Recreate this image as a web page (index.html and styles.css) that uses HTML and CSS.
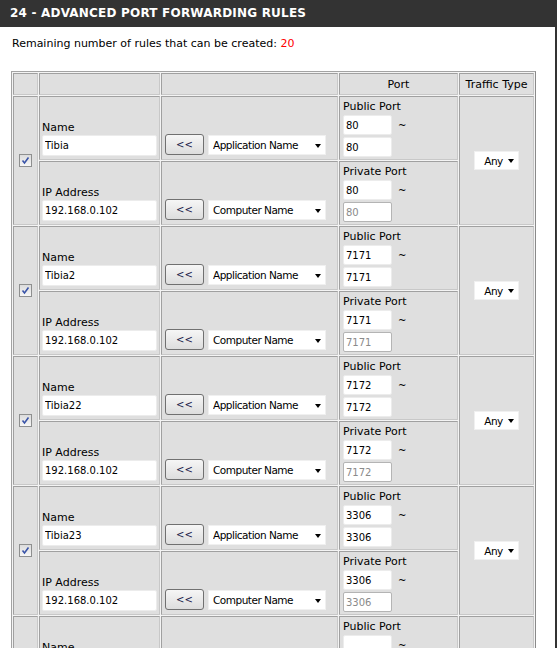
FILE: index.html
```html
<!DOCTYPE html>
<html>
<head>
<meta charset="utf-8">
<title>Advanced Port Forwarding Rules</title>
<link rel="stylesheet" href="styles.css">
</head>
<body>
<div class="page">
  <div class="title">24 - ADVANCED PORT FORWARDING RULES</div>
  <div class="content">
    <p class="remaining">Remaining number of rules that can be created: <span class="count">20</span></p>
    <table class="rules">
      <colgroup><col class="c1"><col class="c2"><col class="c3"><col class="c4"><col class="c5"></colgroup>
      <tr class="head"><td></td><td></td><td></td><td>Port</td><td>Traffic Type</td></tr>

      <tr class="sub">
        <td rowspan="2" class="chk"><span class="checkbox"><svg viewBox="0 0 11 11" width="11" height="11"><path d="M2.5 5.5 L4.5 8 L8.5 2.5" fill="none" stroke="#3a54a8" stroke-width="1.6"/></svg></span></td>
        <td class="field"><div class="lbl">Name</div><input class="text" value="Tibia"></td>
        <td class="pick"><button class="btn">&lt;&lt;</button><span class="sel wide"><span class="seltext">Application Name</span><span class="arrow"></span></span></td>
        <td class="port"><div class="lbl">Public Port</div><div class="prow"><input class="pin" value="80"><span class="tilde">~</span></div><input class="pin" value="80"></td>
        <td rowspan="2" class="traffic"><span class="sel any"><span class="seltext">Any</span><span class="arrow"></span></span></td>
      </tr>
      <tr class="sub">
        <td class="field"><div class="lbl">IP Address</div><input class="text" value="192.168.0.102"></td>
        <td class="pick"><button class="btn">&lt;&lt;</button><span class="sel wide"><span class="seltext">Computer Name</span><span class="arrow"></span></span></td>
        <td class="port"><div class="lbl">Private Port</div><div class="prow"><input class="pin" value="80"><span class="tilde">~</span></div><input class="pin dis" value="80" disabled></td>
      </tr>

      <tr class="sub">
        <td rowspan="2" class="chk"><span class="checkbox"><svg viewBox="0 0 11 11" width="11" height="11"><path d="M2.5 5.5 L4.5 8 L8.5 2.5" fill="none" stroke="#3a54a8" stroke-width="1.6"/></svg></span></td>
        <td class="field"><div class="lbl">Name</div><input class="text" value="Tibia2"></td>
        <td class="pick"><button class="btn">&lt;&lt;</button><span class="sel wide"><span class="seltext">Application Name</span><span class="arrow"></span></span></td>
        <td class="port"><div class="lbl">Public Port</div><div class="prow"><input class="pin" value="7171"><span class="tilde">~</span></div><input class="pin" value="7171"></td>
        <td rowspan="2" class="traffic"><span class="sel any"><span class="seltext">Any</span><span class="arrow"></span></span></td>
      </tr>
      <tr class="sub">
        <td class="field"><div class="lbl">IP Address</div><input class="text" value="192.168.0.102"></td>
        <td class="pick"><button class="btn">&lt;&lt;</button><span class="sel wide"><span class="seltext">Computer Name</span><span class="arrow"></span></span></td>
        <td class="port"><div class="lbl">Private Port</div><div class="prow"><input class="pin" value="7171"><span class="tilde">~</span></div><input class="pin dis" value="7171" disabled></td>
      </tr>

      <tr class="sub">
        <td rowspan="2" class="chk"><span class="checkbox"><svg viewBox="0 0 11 11" width="11" height="11"><path d="M2.5 5.5 L4.5 8 L8.5 2.5" fill="none" stroke="#3a54a8" stroke-width="1.6"/></svg></span></td>
        <td class="field"><div class="lbl">Name</div><input class="text" value="Tibia22"></td>
        <td class="pick"><button class="btn">&lt;&lt;</button><span class="sel wide"><span class="seltext">Application Name</span><span class="arrow"></span></span></td>
        <td class="port"><div class="lbl">Public Port</div><div class="prow"><input class="pin" value="7172"><span class="tilde">~</span></div><input class="pin" value="7172"></td>
        <td rowspan="2" class="traffic"><span class="sel any"><span class="seltext">Any</span><span class="arrow"></span></span></td>
      </tr>
      <tr class="sub">
        <td class="field"><div class="lbl">IP Address</div><input class="text" value="192.168.0.102"></td>
        <td class="pick"><button class="btn">&lt;&lt;</button><span class="sel wide"><span class="seltext">Computer Name</span><span class="arrow"></span></span></td>
        <td class="port"><div class="lbl">Private Port</div><div class="prow"><input class="pin" value="7172"><span class="tilde">~</span></div><input class="pin dis" value="7172" disabled></td>
      </tr>

      <tr class="sub">
        <td rowspan="2" class="chk"><span class="checkbox"><svg viewBox="0 0 11 11" width="11" height="11"><path d="M2.5 5.5 L4.5 8 L8.5 2.5" fill="none" stroke="#3a54a8" stroke-width="1.6"/></svg></span></td>
        <td class="field"><div class="lbl">Name</div><input class="text" value="Tibia23"></td>
        <td class="pick"><button class="btn">&lt;&lt;</button><span class="sel wide"><span class="seltext">Application Name</span><span class="arrow"></span></span></td>
        <td class="port"><div class="lbl">Public Port</div><div class="prow"><input class="pin" value="3306"><span class="tilde">~</span></div><input class="pin" value="3306"></td>
        <td rowspan="2" class="traffic"><span class="sel any"><span class="seltext">Any</span><span class="arrow"></span></span></td>
      </tr>
      <tr class="sub">
        <td class="field"><div class="lbl">IP Address</div><input class="text" value="192.168.0.102"></td>
        <td class="pick"><button class="btn">&lt;&lt;</button><span class="sel wide"><span class="seltext">Computer Name</span><span class="arrow"></span></span></td>
        <td class="port"><div class="lbl">Private Port</div><div class="prow"><input class="pin" value="3306"><span class="tilde">~</span></div><input class="pin dis" value="3306" disabled></td>
      </tr>

      <tr class="sub">
        <td rowspan="2" class="chk"><span class="checkbox empty"></span></td>
        <td class="field"><div class="lbl">Name</div><input class="text" value=""></td>
        <td class="pick"><button class="btn">&lt;&lt;</button><span class="sel wide"><span class="seltext">Application Name</span><span class="arrow"></span></span></td>
        <td class="port"><div class="lbl">Public Port</div><div class="prow"><input class="pin" value=""><span class="tilde">~</span></div><input class="pin" value=""></td>
        <td rowspan="2" class="traffic"><span class="sel any"><span class="seltext">Any</span><span class="arrow"></span></span></td>
      </tr>
      <tr class="sub">
        <td class="field"><div class="lbl">IP Address</div><input class="text" value=""></td>
        <td class="pick"><button class="btn">&lt;&lt;</button><span class="sel wide"><span class="seltext">Computer Name</span><span class="arrow"></span></span></td>
        <td class="port"><div class="lbl">Private Port</div><div class="prow"><input class="pin" value=""><span class="tilde">~</span></div><input class="pin dis" value="" disabled></td>
      </tr>
    </table>
  </div>
</div>
</body>
</html>
```

FILE: styles.css
```css
html, body {
  margin: 0;
  padding: 0;
  background: #fff;
}

body {
  font-family: "DejaVu Sans", Verdana, sans-serif;
  font-size: 11px;
  color: #000;
}

.page {
  width: 555px;
  border-right: 2px solid #333;
  min-height: 700px;
}

.title {
  height: 27px;
  margin-right: -2px;
  background: #333;
  color: #fff;
  font-weight: bold;
  font-size: 12px;
  letter-spacing: 0.2px;
  line-height: 27px;
  padding-left: 10px;
}

.content {
  padding-left: 11px;
}

.remaining {
  margin: 0;
  padding: 10px 0 0 1px;
  line-height: 14px;
}

.count {
  color: #f00;
}

.rules {
  margin-top: 20px;
  width: 525px;
  table-layout: fixed;
  border-collapse: separate;
  border-spacing: 1px;
  border: 1px solid #a3a3a3;
  border-right-color: #8a8a8a;
  border-bottom-color: #8a8a8a;
  background: #f4f4f4;
}

.c1 { width: 25px; }
.c2 { width: 121px; }
.c3 { width: 177px; }
.c4 { width: 119px; }
.c5 { width: 75px; }

.rules td {
  box-sizing: border-box;
  background: #dfdfdf;
  border: 1px solid #a0a0a0;
  border-right-color: #c8c8c8;
  border-bottom-color: #c8c8c8;
  padding: 0;
}

.head td {
  height: 22px;
  text-align: center;
  vertical-align: middle;
  font-size: 11px;
}

.sub td {
  height: 64px;
}

.chk {
  text-align: center;
  vertical-align: middle;
}

.checkbox {
  display: inline-flex;
  align-items: center;
  justify-content: center;
  width: 13px;
  height: 13px;
  box-sizing: border-box;
  border: 1px solid #8e8f8f;
  background: linear-gradient(#dcdcdc, #f6f6f6);
  vertical-align: middle;
}

.lbl {
  line-height: 15px;
  white-space: nowrap;
}

.field {
  vertical-align: bottom;
  padding: 0 0 3px 2px !important;
}

.text {
  display: block;
  box-sizing: border-box;
  width: 115px;
  height: 21px;
  margin: 0;
  padding: 0 2px;
  border: 1px solid #ececec;
  border-radius: 2px;
  background: #fff;
  font-family: "DejaVu Sans", Verdana, sans-serif;
  font-size: 10px;
  color: #000;
  outline: none;
}

.pick {
  vertical-align: bottom;
  padding: 0 0 4px 3px !important;
  white-space: nowrap;
}

.pick .btn,
.pick .sel {
  vertical-align: bottom;
}

.btn {
  box-sizing: border-box;
  width: 39px;
  height: 21px;
  margin: 0 4px 0 0;
  padding: 0;
  border: 1px solid #707070;
  border-radius: 3px;
  background: linear-gradient(#f6f6f6, #dddddd);
  font-family: "DejaVu Sans", Verdana, sans-serif;
  font-size: 10px;
  color: #1a1a4a;
}

.sel {
  display: inline-flex;
  align-items: center;
  box-sizing: border-box;
  height: 20px;
  padding: 0 4px 0 4px;
  background: #fff;
  border: 1px solid #f0f0f0;
  font-size: 10.5px;
  white-space: nowrap;
}

.sel.wide {
  width: 118px;
}

.sel.any {
  width: 45px;
  height: 19px;
}

.seltext {
  flex: 1;
  letter-spacing: -0.5px;
  overflow: hidden;
}

.arrow {
  width: 0;
  height: 0;
  border-left: 3.5px solid transparent;
  border-right: 3.5px solid transparent;
  border-top: 4px solid #000;
  margin-top: 1px;
}

.port {
  vertical-align: top;
  padding: 2px 0 0 3px !important;
}

.port .lbl {
  line-height: 15px;
}

.prow {
  display: flex;
  align-items: center;
  margin-top: 1px;
}

.pin {
  display: block;
  box-sizing: border-box;
  width: 49px;
  height: 20px;
  margin: 0;
  padding: 0 2px;
  border: 1px solid #ececec;
  border-radius: 2px;
  background: #fff;
  font-family: "DejaVu Sans", Verdana, sans-serif;
  font-size: 10px;
  color: #000;
  outline: none;
}

.prow + .pin {
  margin-top: 2px;
}

.pin.dis {
  border-color: #b4b4b4;
  color: #8a8a8a;
  background: #fff;
}

.tilde {
  margin-left: 6px;
  font-size: 10px;
}

.traffic {
  text-align: center;
  vertical-align: middle;
}
```
